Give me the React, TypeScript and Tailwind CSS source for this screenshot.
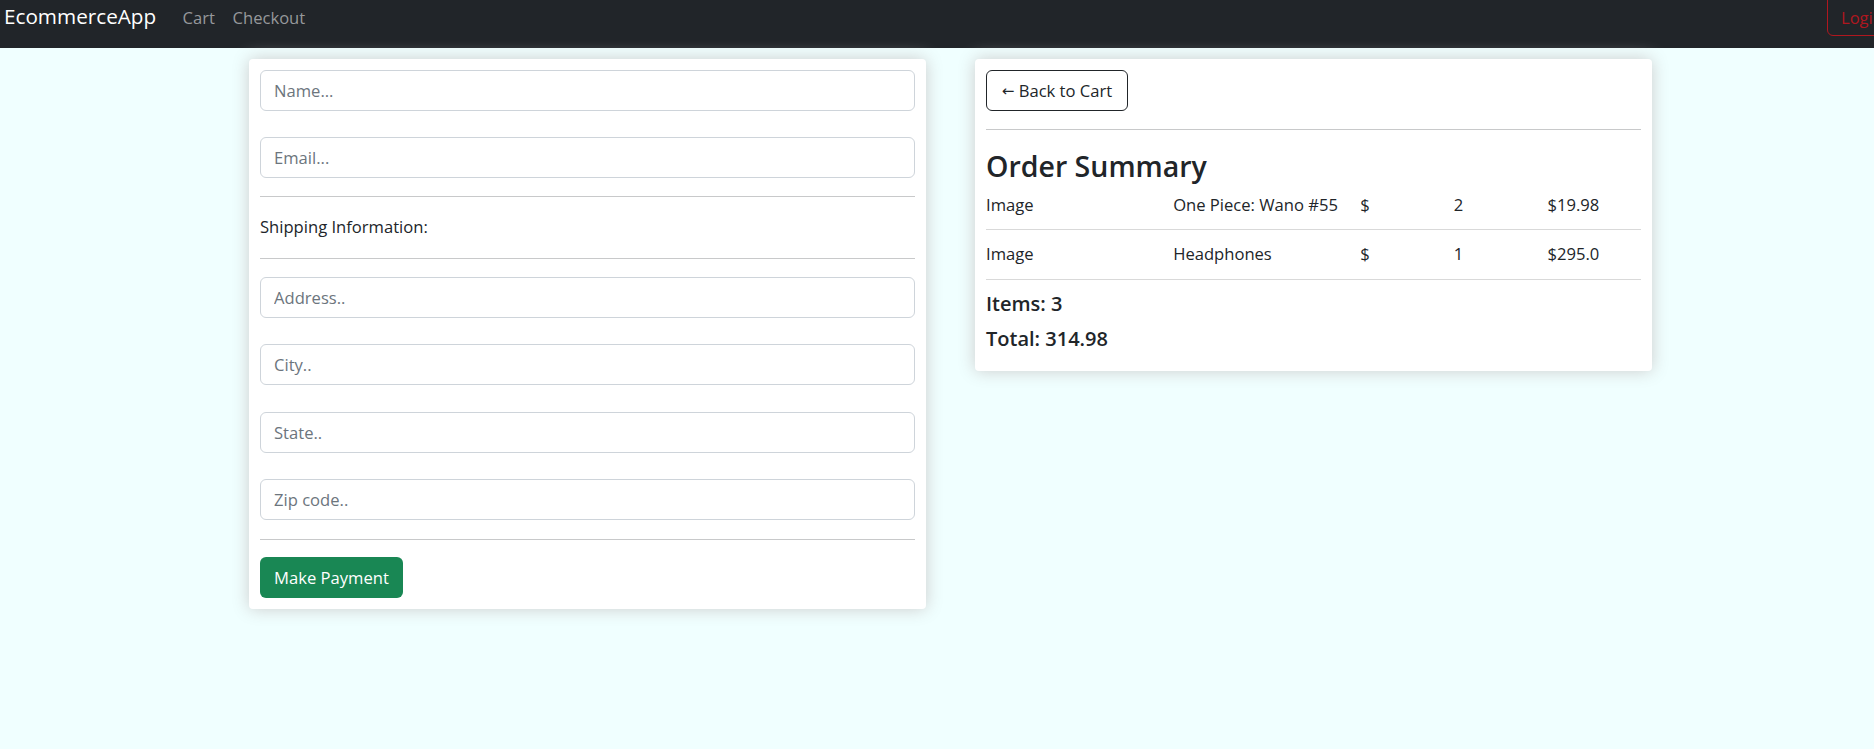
import React from "react";

const inputCls =
  "block w-full h-[41px] rounded-[6px] border border-[#ced4da] bg-white px-[13px] text-[16.6px] leading-[26px] text-[#212529] placeholder:text-[#6c757d] outline-none";

function Field({ placeholder, className = "" }: { placeholder: string; className?: string }) {
  return <input type="text" placeholder={placeholder} className={`${inputCls} ${className}`} />;
}

function Row({ name, qty, total }: { name: string; qty: string; total: string }) {
  return (
    <div className="flex pb-[11px] mb-[11px] border-b border-[#d9d9d9] text-[16.6px] leading-[26.4px] text-[#212529]">
      <div className="flex-[2] min-w-0">Image</div>
      <div className="flex-[2] min-w-0 whitespace-nowrap">{name}</div>
      <div className="flex-1 min-w-0">$</div>
      <div className="flex-1 min-w-0">{qty}</div>
      <div className="flex-1 min-w-0">{total}</div>
    </div>
  );
}

export default function App() {
  return (
    <div className="min-h-[749px] bg-[#f0ffff] font-['Open_Sans',sans-serif] text-[#212529]">
      <nav className="h-[48px] bg-[#212529] flex items-start overflow-hidden">
        <span className="ml-[4px] mr-[17.6px] text-[20.7px] leading-[33px] text-white whitespace-nowrap">
          EcommerceApp
        </span>
        <span className="mt-[5px] px-[8.8px] text-[16.6px] leading-[26.4px] text-[#96989b]">Cart</span>
        <span className="mt-[5px] px-[8.8px] text-[16.6px] leading-[26.4px] text-[#96989b]">Checkout</span>
        <button className="ml-auto mr-[-23px] -mt-[6px] h-[42px] shrink-0 rounded-[6px] border border-[#b0171f] px-[13px] pt-[10px] pb-[4px] text-[16.6px] leading-[26px] text-[#b0171f]">
          Login
        </button>
      </nav>

      <div className="flex items-start gap-[49px] pl-[249px] mt-[11px]">
        {/* Left card: form */}
        <div className="w-[677px] shrink-0 bg-white rounded-[4px] shadow-[0_0_17px_#cccccc] p-[11px]">
          <Field placeholder="Name..." />
          <Field placeholder="Email..." className="mt-[26px]" />
          <div className="mt-[18px] h-px bg-[#c8c9ca]" />
          <p className="mt-[17px] mb-[18px] text-[16.6px] leading-[26px]">Shipping Information:</p>
          <div className="h-px bg-[#c8c9ca]" />
          <Field placeholder="Address.." className="mt-[18px]" />
          <Field placeholder="City.." className="mt-[26px]" />
          <Field placeholder="State.." className="mt-[27px]" />
          <Field placeholder="Zip code.." className="mt-[26px]" />
          <div className="mt-[19px] h-px bg-[#c8c9ca]" />
          <button className="mt-[17px] flex h-[41px] w-[143px] items-center justify-center rounded-[6px] bg-[#198754] text-[16.6px] leading-[26px] text-white">
            Make Payment
          </button>
        </div>

        {/* Right card: summary */}
        <div className="w-[677px] shrink-0 bg-white rounded-[4px] shadow-[0_0_17px_#cccccc] p-[11px]">
          <button className="flex h-[41px] w-[142px] items-center justify-center rounded-[6px] border border-[#212529] text-[16.6px] leading-[26px] text-[#212529] whitespace-nowrap">
            <span className="font-['DejaVu_Sans',sans-serif] text-[15px]">←</span>
            <span>&nbsp;Back to Cart</span>
          </button>
          <div className="mt-[18px] h-px bg-[#c8c9ca]" />
          <h3 className="mt-[18px] mb-[7px] text-[28.5px] leading-[37px] font-semibold">Order Summary</h3>
          <Row name="One Piece: Wano #55" qty="2" total="$19.98" />
          <Row name="Headphones" qty="1" total="$295.0" />
          <h5 className="text-[20px] leading-[26.4px] font-semibold mb-[8.8px]">Items: 3</h5>
          <h5 className="text-[20px] leading-[26.4px] font-semibold mb-[8px]">Total: 314.98</h5>
        </div>
      </div>
    </div>
  );
}
